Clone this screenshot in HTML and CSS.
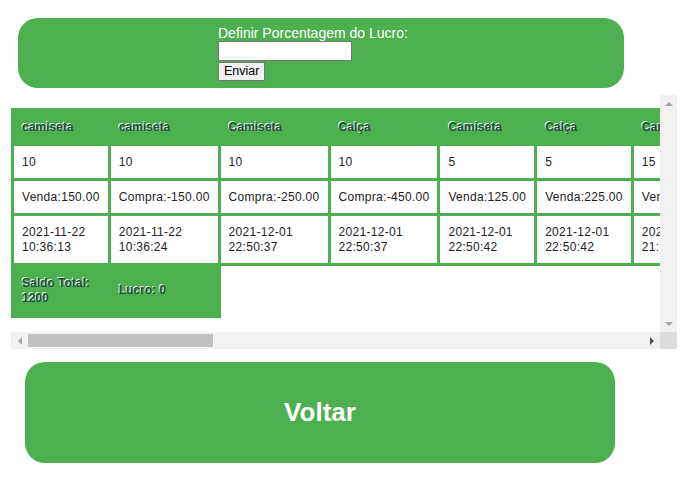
FILE: index.html
```html
<!DOCTYPE html>
<html lang="pt">
<head>
<meta charset="utf-8">
<title>Histórico</title>
<link rel="stylesheet" href="styles.css">
</head>
<body>
<form class="lucro-box">
  <label class="lucro-label" for="pct">Definir Porcentagem do Lucro:</label>
  <input class="lucro-input" id="pct" type="text">
  <button class="lucro-btn" type="button">Enviar</button>
</form>

<div class="scroll-frame">
  <div class="viewport">
    <table class="hist">
      <tr>
        <th>camiseta</th><th>camiseta</th><th>Camiseta</th><th>Calça</th><th>Camiseta</th><th>Calça</th><th>Camiseta</th><th>Calça</th><th>Camiseta</th><th>Calça</th><th>camiseta</th><th>Calça</th><th>Camiseta</th><th>Calça</th><th>Camiseta</th><th>Calça</th><th>Camiseta</th><th>Calça</th><th>Camiseta</th><th>Calça</th>
      </tr>
      <tr>
        <td>10</td><td>10</td><td>10</td><td>10</td><td>5</td><td>5</td><td>15</td><td>15</td><td>20</td><td>10</td><td>5</td><td>5</td><td>10</td><td>10</td><td>5</td><td>5</td><td>10</td><td>20</td><td>5</td><td>10</td>
      </tr>
      <tr>
        <td>Venda:150.00</td><td>Compra:-150.00</td><td>Compra:-250.00</td><td>Compra:-450.00</td><td>Venda:125.00</td><td>Venda:225.00</td><td>Venda:375.00</td><td>Compra:-675.00</td><td>Compra:-500.00</td><td>Venda:450.00</td><td>Compra:-75.00</td><td>Venda:225.00</td><td>Compra:-250.00</td><td>Venda:450.00</td><td>Venda:125.00</td><td>Compra:-225.00</td><td>Venda:250.00</td><td>Compra:-900.00</td><td>Venda:125.00</td><td>Venda:450.00</td>
      </tr>
      <tr>
        <td>2021-11-22 10:36:13</td><td>2021-11-22 10:36:24</td><td>2021-12-01 22:50:37</td><td>2021-12-01 22:50:37</td><td>2021-12-01 22:50:42</td><td>2021-12-01 22:50:42</td><td>2021-12-02 21:14:05</td><td>2021-12-02 21:14:05</td><td>2021-12-03 09:12:48</td><td>2021-12-03 09:12:48</td><td>2021-12-04 15:40:11</td><td>2021-12-04 15:40:11</td><td>2021-12-05 18:02:33</td><td>2021-12-05 18:02:33</td><td>2021-12-06 11:25:09</td><td>2021-12-06 11:25:09</td><td>2021-12-07 20:47:52</td><td>2021-12-07 20:47:52</td><td>2021-12-08 13:31:27</td><td>2021-12-08 13:31:27</td>
      </tr>
      <tr>
        <td class="total">Saldo Total: 1200</td><td class="total">Lucro: 0</td>
      </tr>
    </table>
  </div>
  <div class="vbar">
    <span class="sb-btn"><span class="arrow arrow-up"></span></span>
    <span class="sb-track"></span>
    <span class="sb-btn"><span class="arrow arrow-down"></span></span>
  </div>
  <div class="hbar">
    <span class="sb-btn"><span class="arrow arrow-left"></span></span>
    <span class="sb-track sb-track-h"><span class="sb-thumb"></span></span>
    <span class="sb-btn"><span class="arrow arrow-right"></span></span>
  </div>
  <div class="sb-corner"></div>
</div>

<button class="voltar" type="button">Voltar</button>
</body>
</html>
```

FILE: styles.css
```css
html, body {
  margin: 0;
  padding: 0;
  background: #fff;
}
body {
  padding: 8px;
  font-family: "Liberation Sans", Arial, sans-serif;
}

/* ---------- top form ---------- */
.lucro-box {
  box-sizing: border-box;
  width: 606px;
  height: 70px;
  margin: 10px 0 0 10px;
  padding: 8px 0 0 200px;
  background: #4caf50;
  border-radius: 20px;
  display: flex;
  flex-direction: column;
  align-items: flex-start;
}
.lucro-label {
  color: #fff;
  font-size: 14px;
  line-height: 15px;
  font-family: "Liberation Sans", Arial, sans-serif;
}
.lucro-input {
  box-sizing: border-box;
  width: 134px;
  height: 20px;
  margin: 0;
  border: 1px solid #767676;
  background: #fff;
  padding: 1px 2px;
}
.lucro-btn {
  box-sizing: border-box;
  height: 19px;
  margin: 1px 0 0 0;
  padding: 0 5px;
  border: 1px solid #767676;
  border-radius: 0;
  background: #efefef;
  color: #000;
  font-family: "Liberation Sans", Arial, sans-serif;
  font-size: 12.5px;
  line-height: 15px;
}

/* ---------- scroll area ---------- */
.scroll-frame {
  display: grid;
  grid-template-columns: 649px 17px;
  grid-template-rows: 237px 17px;
  width: 666px;
  margin: 7px 0 0 3px;
}
.viewport {
  overflow: hidden;
  padding-top: 13px;
}
.vbar {
  display: flex;
  flex-direction: column;
  background: #f1f1f1;
}
.hbar {
  display: flex;
  flex-direction: row;
  background: #f1f1f1;
}
.sb-btn {
  flex: 0 0 17px;
  width: 17px;
  height: 17px;
  display: flex;
  align-items: center;
  justify-content: center;
}
.sb-track {
  flex: 1 1 auto;
}
.sb-track-h {
  display: flex;
  align-items: stretch;
  padding: 2px 0;
}
.sb-thumb {
  width: 185px;
  background: #c1c1c1;
}
.sb-corner {
  background: #dcdcdc;
}
.arrow {
  width: 0;
  height: 0;
  display: block;
}
.arrow-up {
  border-left: 4px solid transparent;
  border-right: 4px solid transparent;
  border-bottom: 4px solid #a3a3a3;
}
.arrow-down {
  border-left: 4px solid transparent;
  border-right: 4px solid transparent;
  border-top: 4px solid #a3a3a3;
}
.arrow-left {
  border-top: 4px solid transparent;
  border-bottom: 4px solid transparent;
  border-right: 4px solid #a3a3a3;
}
.arrow-right {
  border-top: 4px solid transparent;
  border-bottom: 4px solid transparent;
  border-left: 4px solid #505050;
}

/* ---------- table ---------- */
.hist {
  border-collapse: collapse;
  font-family: "Liberation Sans", Arial, sans-serif;
  font-size: 12px;
  line-height: 15px;
  letter-spacing: 0.3px;
}
.hist th,
.hist td {
  border: 3px solid #4caf50;
  padding: 8.5px 8px;
  text-align: left;
  vertical-align: middle;
  white-space: normal;
}
.hist td {
  color: #222;
  background: #fff;
}
.hist th,
.hist td.total {
  background: #4caf50;
  color: #1f4f3c;
  font-weight: bold;
  letter-spacing: 0;
  text-shadow: -1px -1px 0 rgba(255, 255, 255, 0.85);
}
.hist td.total {
  padding: 9.5px 8px;
  line-height: 15px;
}

/* ---------- back button ---------- */
.voltar {
  display: block;
  box-sizing: border-box;
  width: 590px;
  height: 101px;
  margin: 13px 0 0 17px;
  border: none;
  border-radius: 20px;
  background: #4caf50;
  color: #fff;
  font-family: "Liberation Sans", Arial, sans-serif;
  font-size: 26px;
  font-weight: bold;
}
```
